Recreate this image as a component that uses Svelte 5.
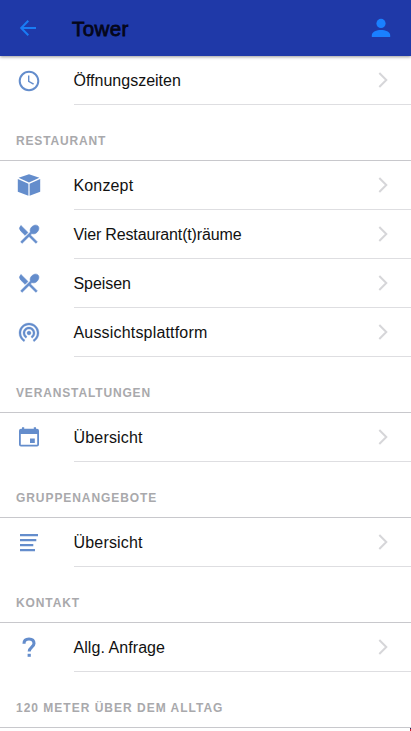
<script lang="ts">
	type Item = { label: string; icon: string; spacing?: number };
	type Section = { title?: string; spacing?: number; items: Item[] };

	// 24x24 glyphs
	const icons: Record<string, string> = {
		clock:
			'M12 1.7C6.3 1.7 1.7 6.3 1.7 12S6.3 22.3 12 22.3 22.3 17.7 22.3 12 17.7 1.7 12 1.7zm0 18.6a8.3 8.3 0 1 1 0-16.6 8.3 8.3 0 0 1 0 16.6zM12.4 6.5H11v6.2l5.2 3.1.8-1.2-4.6-2.7V6.5z',
		cube: 'M12 1.2 22.4 4.8 12 9.5 1.6 4.8 12 1.2zM.8 6l10.6 4.7v12L.8 18.8V6zM23.2 6v12.8l-10.6 3.9v-12L23.2 6z',
		dining:
			'M8.1 13.34l2.83-2.83L3.91 3.5a4.008 4.008 0 0 0 0 5.66l4.19 4.18zm6.78-1.81c1.53.71 3.68.21 5.27-1.38 1.91-1.91 2.28-4.65.81-6.12-1.46-1.46-4.2-1.1-6.12.81-1.59 1.59-2.09 3.74-1.38 5.27L3.7 19.87l1.41 1.41L12 14.41l6.88 6.88 1.41-1.41L13.41 13l1.47-1.47z',
		tower:
			'M12 11c-1.1 0-2 .9-2 2s.9 2 2 2 2-.9 2-2-.9-2-2-2zm6 2c0-3.31-2.69-6-6-6s-6 2.69-6 6c0 2.22 1.21 4.15 3 5.19l1-1.74c-1.19-.7-2-1.97-2-3.45 0-2.21 1.79-4 4-4s4 1.79 4 4c0 1.48-.81 2.75-2 3.45l1 1.74c1.79-1.04 3-2.97 3-5.19zM12 3C6.48 3 2 7.48 2 13c0 3.7 2.01 6.92 4.99 8.65l1-1.73C5.61 18.53 4 15.96 4 13c0-4.42 3.58-8 8-8s8 3.58 8 8c0 2.96-1.61 5.53-4 6.92l1 1.73c2.99-1.73 5-4.95 5-8.65 0-5.52-4.48-10-10-10z',
		event:
			'M17.8 13.5h-4.8v4.5h4.8v-4.5zM16.8 2.3v1.5H7.2V2.3H5v1.5H4a2 2 0 0 0-2 2V19.5a2 2 0 0 0 2 2h16a2 2 0 0 0 2-2V5.8a2 2 0 0 0-2-2h-1V2.3h-2.2zM20.2 19.8H3.8V9h16.4V19.800z',
		text: 'M3 4h18v2.3H3zM3 9h16.3v2.3H3zM3 14h13.3v2.3H3zM3 19h15v2.3H3z'
	};

	const sections: Section[] = [
		{ items: [{ label: 'Öffnungszeiten', icon: 'clock' }] },
		{
			title: 'Restaurant',
			spacing: 0.85,
			items: [
				{ label: 'Konzept', icon: 'cube', spacing: 0.15 },
				{ label: 'Vier Restaurant(t)räume', icon: 'dining', spacing: -0.15 },
				{ label: 'Speisen', icon: 'dining', spacing: -0.05 },
				{ label: 'Aussichtsplattform', icon: 'tower', spacing: 0.18 }
			]
		},
		{
			title: 'Veranstaltungen',
			spacing: 0.85,
			items: [{ label: 'Übersicht', icon: 'event', spacing: 0.18 }]
		},
		{
			title: 'Gruppenangebote',
			spacing: 0.93,
			items: [{ label: 'Übersicht', icon: 'text', spacing: 0.18 }]
		},
		{
			title: 'Kontakt',
			spacing: 0.9,
			items: [{ label: 'Allg. Anfrage', icon: 'help', spacing: 0.06 }]
		},
		{ title: '120 Meter über dem Alltag', items: [] }
	];
</script>

<div class="page">
	<header class="navbar">
		<button class="back" aria-label="Zurück">
			<svg viewBox="0 0 24 24" width="24" height="24">
				<path d="M12.3 4.7 5.2 12l7.1 7.3M5.2 12H20" />
			</svg>
		</button>
		<h1>Tower</h1>
		<button class="profile" aria-label="Profil">
			<svg viewBox="0 0 24 24" width="24" height="24">
				<circle cx="12" cy="7.4" r="4.6" />
				<path d="M2.8 20.9v-1.5c0-3.5 5-5.3 9.2-5.3s9.2 1.8 9.2 5.3v1.5z" />
			</svg>
		</button>
	</header>

	<main>
		{#each sections as section}
			{#if section.title}
				<h2 style:letter-spacing={section.spacing ? `${section.spacing}px` : null}>{section.title}</h2>
			{/if}
			{#each section.items as item}
				<div class="item">
					<svg class="icon {item.icon}" viewBox="0 0 24 24" width="24" height="24">
						{#if item.icon === 'help'}
							<path class="hook" d="M7 8.7C7 5.6 9 4 12 4s5 1.700 5 4.500c0 3.500-4.800 3.800-4.800 8" />
							<path d="M10.6 18.8h3.2v3h-3.2z" />
						{:else}
							<path d={icons[item.icon]} />
						{/if}
					</svg>
					<div class="inner">
						<span style:letter-spacing={item.spacing ? `${item.spacing}px` : null}>{item.label}</span>
						<svg class="chevron" viewBox="0 0 10 16" width="10" height="16">
							<path d="M1.3 1l7 7-7 7" />
						</svg>
					</div>
				</div>
			{/each}
		{/each}
	</main>

	<i class="edge"></i>
</div>

<style>
	:global(body) {
		margin: 0;
		background: #fff;
	}
	.page {
		position: relative;
		height: 731px;
		overflow: hidden;
		background: #fff;
		font-family: 'Liberation Sans', Arial, sans-serif;
		color: #111;
	}
	.navbar {
		position: relative;
		display: flex;
		align-items: center;
		box-sizing: border-box;
		height: 56px;
		padding: 0 18px 0 16px;
		background: #1f39a8;
		box-shadow: 0 1px 3px rgba(0, 0, 0, 0.4);
	}
	button {
		display: block;
		padding: 0;
		border: 0;
		background: none;
		line-height: 0;
	}
	.back path {
		fill: none;
		stroke: #1a7cf4;
		stroke-width: 2;
	}
	.profile {
		fill: #1a80ff;
	}
	h1 {
		flex: 1;
		margin: 2px 0 0 32px;
		font-size: 20.5px;
		font-weight: 400;
		line-height: 24px;
		letter-spacing: 0.4px;
		color: #04061a;
		-webkit-text-stroke: 0.8px #04061a;
	}
	h2 {
		box-sizing: border-box;
		height: 56px;
		margin: 0;
		padding: 29px 16px 0;
		border-bottom: 1px solid #c8c8cc;
		font-size: 12px;
		font-weight: 700;
		line-height: 14px;
		letter-spacing: 1px;
		text-transform: uppercase;
		white-space: nowrap;
		color: #a9a9ac;
	}
	.item {
		display: flex;
		align-items: center;
		height: 49px;
		padding-left: 17px;
	}
	.icon {
		flex: none;
		margin-bottom: 1px;
		fill: #648dcc;
	}
	.clock {
		margin-bottom: 0;
	}
	.dining {
		stroke: #648dcc;
		stroke-width: 0.7;
	}
	.tower {
		margin-bottom: 2px;
		stroke: #648dcc;
		stroke-width: 0.3;
	}
	.hook {
		fill: none;
		stroke: #648dcc;
		stroke-width: 3.1;
	}
	.inner {
		display: flex;
		flex: 1;
		align-items: center;
		justify-content: space-between;
		box-sizing: border-box;
		height: 49px;
		margin-left: 33px;
		padding-right: 23px;
		border-bottom: 1px solid #dedee1;
		font-size: 16px;
		line-height: 20px;
		white-space: nowrap;
	}
	.inner span {
		padding-top: 2px;
		margin-left: -0.5px;
	}
	.chevron {
		fill: none;
		stroke: #d6d6d9;
		stroke-width: 2;
	}
	/* floating button, off screen except for its edge */
	.edge {
		position: absolute;
		right: 0;
		bottom: 0;
		width: 1px;
		height: 3px;
		background: linear-gradient(#20265c 1px, #d02030 1px);
	}
</style>
